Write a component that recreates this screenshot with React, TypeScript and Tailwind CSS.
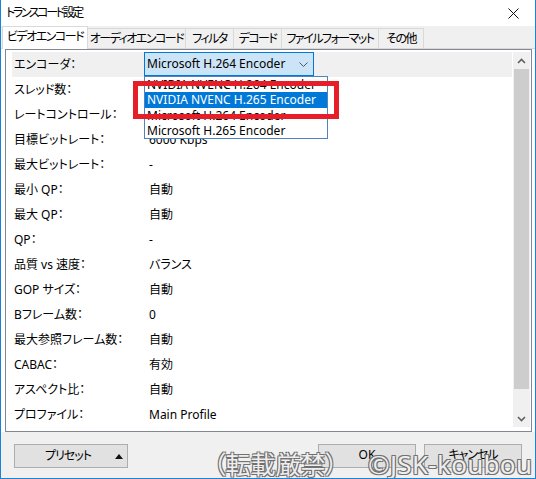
import React from 'react';

const FONT = "[font-family:'Noto_Sans','Noto_Sans_CJK_JP',sans-serif] [font-feature-settings:'palt']";

const tabs = ['ビデオエンコード', 'オーディオエンコード', 'フィルタ', 'デコード', 'ファイルフォーマット', 'その他'];
const tabWidths = ['w-[86px]', 'w-[98px]', 'w-[48px]', 'w-[48px]', 'w-[97px]', 'w-[45px]'];

const rows: [string, string][] = [
  ['エンコーダ：', ''],
  ['スレッド数：', '自動'],
  ['レートコントロール：', 'VBR'],
  ['目標ビットレート：', '6000 Kbps'],
  ['最大ビットレート：', '-'],
  ['最小 QP：', '自動'],
  ['最大 QP：', '自動'],
  ['QP：', '-'],
  ['品質 vs 速度：', 'バランス'],
  ['GOP サイズ：', '自動'],
  ['Bフレーム数：', '0'],
  ['最大参照フレーム数：', '自動'],
  ['CABAC：', '有効'],
  ['アスペクト比：', '自動'],
  ['プロファイル：', 'Main Profile'],
];

const encoders = ['NVIDIA NVENC H.264 Encoder', 'NVIDIA NVENC H.265 Encoder', 'Microsoft H.264 Encoder', 'Microsoft H.265 Encoder'];

const Chevron = ({ up = false, className = '' }: { up?: boolean; className?: string }) => (
  <svg width="9" height="6" viewBox="0 0 9 6" className={className}>
    <path d={up ? 'M1 5 L4.5 1.5 L8 5' : 'M1 1 L4.5 4.5 L8 1'} fill="none" stroke="currentColor" strokeWidth="1.6" />
  </svg>
);

export default function App() {
  return (
    <div className={`${FONT} relative w-[536px] h-[479px] bg-[#f0f0f0] border-x border-b border-[#1883d7] flex flex-col overflow-hidden text-[12px] text-black`}>
      {/* Title bar */}
      <div className="h-[26px] bg-white flex items-center justify-between pl-[5px] pr-[16px] shrink-0">
        <span className="tracking-[-2.4px] whitespace-nowrap">トランスコード設定</span>
        <svg width="11" height="11" viewBox="0 0 11 11">
          <path d="M0.5 0.5 L10.5 10.5 M10.5 0.5 L0.5 10.5" stroke="#111" strokeWidth="1" />
        </svg>
      </div>

      {/* Tabs */}
      <div className="h-[22px] flex items-end pl-[1px] shrink-0 relative z-10">
        {tabs.map((t, i) =>
          i === 0 ? (
            <div key={t} className={`${tabWidths[i]} h-[23px] -mb-[1px] bg-white border-x border-t border-[#d9d9d9] flex items-center justify-center pb-[2px] tracking-[-1.5px] whitespace-nowrap`}>
              {t}
            </div>
          ) : (
            <div key={t} className={`${tabWidths[i]} h-[20px] bg-[#f0f0f0] border-t border-r border-[#d9d9d9] flex items-center justify-center tracking-[-1.5px] whitespace-nowrap`}>
              {t}
            </div>
          )
        )}
      </div>

      {/* Panel */}
      <div className="h-[384px] bg-white border-t border-[#d9d9d9] pl-[4px] shrink-0">
        <div className="w-[527px] h-[383px] border border-[#828790] pt-[2px] pl-[6px] flex relative">
          <div className="w-[500px] flex flex-col">
            {rows.map(([label, value], i) => (
              <div key={label} className={`h-[25px] flex items-center whitespace-nowrap ${i === 0 ? 'bg-[#f0f0f0]' : ''}`}>
                <span className="w-[137px] pl-[2px]">{label}</span>
                <span>{value}</span>
              </div>
            ))}
          </div>
          {/* Scrollbar */}
          <div className="w-[17px] h-[375px] ml-[1px] bg-[#f0f0f0] flex flex-col">
            <div className="h-[17px] flex items-center justify-center text-[#606060]">
              <Chevron up />
            </div>
            <div className="h-[320px] mx-[1px] bg-[#cdcdcd]" />
            <div className="flex-1" />
            <div className="h-[17px] flex items-center justify-center text-[#606060]">
              <Chevron />
            </div>
          </div>

          {/* Combobox + open list */}
          <div className="absolute left-[138px] top-[2px]">
            <div className="w-[170px] h-[24px] bg-[#cce4f7] border border-[#0078d7] flex items-center justify-between pl-[2px] pr-[5px]">
              <span>Microsoft H.264 Encoder</span>
              <svg width="9" height="5" viewBox="0 0 9 5">
                <path d="M0.5 0.5 L4.5 4.5 L8.5 0.5" fill="none" stroke="#555" strokeWidth="1" />
              </svg>
            </div>
            <div className="w-[184px] border border-[#4f82bf] bg-white flex flex-col">
              {encoders.map((e, i) => (
                <div key={e} className={`pl-[2px] whitespace-nowrap ${i === 1 ? 'bg-[#0078d7] text-white h-[16px] leading-[16px]' : 'h-[15px] leading-[15px]'}`}>
                  {e}
                </div>
              ))}
            </div>
          </div>
          {/* Red highlight */}
          <div className="absolute left-[127px] top-[31px] w-[206px] h-[38px] border-[5px] border-[#e61e28]" />
        </div>
      </div>

      {/* Buttons */}
      <div className="flex-1 flex items-start pt-[12px] pl-[13px]">
        <div className="w-[114px] h-[24px] bg-[#e1e1e1] border border-[#adadad] flex items-center relative">
          <span className="w-full text-center pr-[6px] tracking-[-1px]">プリセット</span>
          <svg width="8" height="5" viewBox="0 0 8 5" className="absolute right-[4px] top-[9px]">
            <path d="M0 5 L4 0 L8 5 Z" fill="#111" />
          </svg>
        </div>
        <div className="ml-[190px] w-[98px] h-[24px] bg-[#e1e1e1] border border-[#adadad] flex items-center justify-center pb-[2px]">OK</div>
        <div className="ml-[8px] w-[98px] h-[24px] bg-[#e1e1e1] border border-[#adadad] flex items-center justify-center pb-[2px] tracking-[-1px]">キャンセル</div>
      </div>

      {/* Watermark */}
      <div className="absolute left-[212px] top-[451px] flex items-center text-[25px] leading-[26px] text-[#eeeeee] [text-shadow:1px_1px_0_#707070,-1px_-1px_0_#707070,1px_-1px_0_#707070,-1px_1px_0_#707070] whitespace-nowrap">
        <span>（転載厳禁）</span>
        <span className="ml-[30px] text-[26px] tracking-[0.3px]">©JSK-koubou</span>
      </div>
    </div>
  );
}
